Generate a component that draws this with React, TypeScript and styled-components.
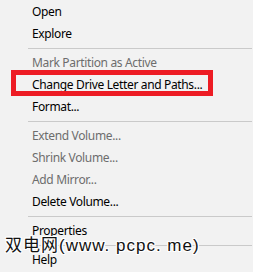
import styled, { createGlobalStyle } from "styled-components";

const GlobalStyle = createGlobalStyle`
  html, body {
    margin: 0;
    padding: 0;
    background: #f2f2f2;
  }
`;

const Menu = styled.div`
  position: relative;
  width: 253px;
  height: 272px;
  overflow: hidden;
  background: #f2f2f2;
  display: flex;
  flex-direction: column;
  padding-top: 1px;
  box-sizing: border-box;
  font-family: "Noto Sans", "Liberation Sans", sans-serif;
  font-size: 12px;
  letter-spacing: -0.35px;
`;

const Item = styled.div<{ disabled?: boolean }>`
  height: 22px;
  line-height: 22px;
  padding-left: 32px;
  white-space: nowrap;
  color: ${(props) => (props.disabled ? "#6d6d6d" : "#000000")};
  flex-shrink: 0;
`;

const Separator = styled.div`
  height: 7px;
  flex-shrink: 0;
  &:after {
    content: "";
    display: block;
    height: 1px;
    margin: 3px 1px 0 28px;
    background-color: #cacaca;
  }
`;

const Highlight = styled.div`
  position: absolute;
  left: 11px;
  top: 70px;
  width: 202px;
  height: 26px;
  box-sizing: border-box;
  border: 5px solid #ed1c24;
`;

const Watermark = styled.div`
  position: absolute;
  left: 5px;
  top: 235px;
  font-family: "Liberation Sans", "Noto Sans CJK SC", sans-serif;
  font-size: 17px;
  line-height: 22px;
  letter-spacing: 1px;
  color: #111111;
  white-space: nowrap;
  text-shadow: 1px 0 0 #fff, -1px 0 0 #fff, 0 1px 0 #fff, 0 -1px 0 #fff,
    1px 1px 0 #fff, -1px -1px 0 #fff, 1px -1px 0 #fff, -1px 1px 0 #fff;
`;

type Entry = { label: string; disabled?: boolean } | "sep";

const entries: Entry[] = [
  { label: "Open" },
  { label: "Explore" },
  "sep",
  { label: "Mark Partition as Active", disabled: true },
  { label: "Change Drive Letter and Paths..." },
  { label: "Format..." },
  "sep",
  { label: "Extend Volume...", disabled: true },
  { label: "Shrink Volume...", disabled: true },
  { label: "Add Mirror...", disabled: true },
  { label: "Delete Volume..." },
  "sep",
  { label: "Properties" },
  "sep",
  { label: "Help" },
];

function App() {
  return (
    <>
      <GlobalStyle />
      <Menu>
        {entries.map((entry, i) =>
          entry === "sep" ? (
            <Separator key={i} />
          ) : (
            <Item key={i} disabled={entry.disabled}>
              {entry.label}
            </Item>
          )
        )}
        <Highlight />
        <Watermark>双电网(www. pcpc. me)</Watermark>
      </Menu>
    </>
  );
}

export default App;
